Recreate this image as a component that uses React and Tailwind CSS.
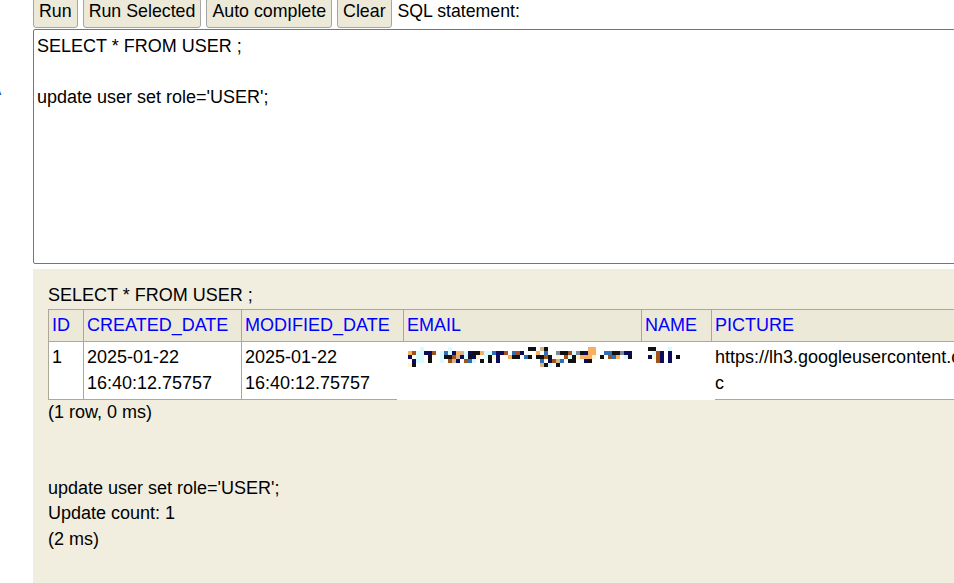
import React from "react";

// colours for the blurred-out email / name blocks
const PIX = {
    c: "#d9fbff",
    k: "#111111",
    n: "#0c0c5a",
    o: "#f8b060",
    b: "#a0521a",
    l: "#2f6fb8",
    t: "#d6b488",
    g: "#7a8a98",
    y: "#fff6d0",
};

const emailRows = [
    "...c......c...................kk.tk..........oo...........",
    "obccnnb.clcnotcnkkocclnnb.lbn...o.l..gkkbcgknoo..llkkgnn..",
    "n.cc.k..ckkbtnckny.ckyn..okk.lk.kkbk.y.bckyoooy.k.blo.ck.",
    ".ncc.k..c.btn.blc.k.k.n..........l.nbtl.kk..nk............",
    "yk...............................tkc.k....................",
];

const nameRows = [
    "kk...c..",
    ".cbn.n..",
    "nybn.n.k",
    "..bn.n..",
];

const PixelRows = ({ rows }) => (
    <div className="flex flex-col">
        {rows.map((row, i) => (
            <div key={i} className="flex h-[4px]">
                {row.split("").map((ch, j) => (
                    <span
                        key={j}
                        className="w-[4px] h-[4px] shrink-0"
                        style={{ backgroundColor: PIX[ch] || "transparent" }}
                    />
                ))}
            </div>
        ))}
    </div>
);

const ToolButton = ({ children }) => (
    <button className="h-[30px] -mt-[2px] px-[5px] pb-[5px] bg-[#ece9d8] border border-[#a6a6a6] rounded-[3px] text-[17.8px] leading-[20px] text-black whitespace-nowrap">
        {children}
    </button>
);

const th = "border border-[#aca899] bg-[#ece9d8] px-[3px] py-[3px] text-left font-normal text-[#0000ff]";
const td = "border border-[#aca899] bg-white px-[3px] py-[3px] align-top";

const App = () => {
    return (
        <div className="w-[954px] h-[583px] overflow-hidden bg-white flex text-black font-['Liberation_Sans',Arial,sans-serif]">
            {/* tree frame, only the edge is visible */}
            <div className="w-[33px] shrink-0 overflow-hidden">
                <div className="mt-[82px] -ml-[8px] text-[14px] leading-[16px] text-[#1f4fa0]">A</div>
            </div>

            <div className="flex-1 min-w-0 flex flex-col">
                {/* toolbar */}
                <div className="h-[29px] flex items-start gap-[5px] shrink-0">
                    <ToolButton>Run</ToolButton>
                    <ToolButton>Run Selected</ToolButton>
                    <ToolButton>Auto complete</ToolButton>
                    <ToolButton>Clear</ToolButton>
                    <span className="ml-[1px] text-[17.7px] leading-[22px] whitespace-nowrap">SQL statement:</span>
                </div>

                {/* query editor */}
                <textarea
                    readOnly
                    className="w-[1000px] h-[235px] shrink-0 border border-[#767676] rounded-[2px] pl-[3px] pt-[4px] text-[18px] leading-[25.5px] resize-none outline-none font-['Liberation_Sans',Arial,sans-serif]"
                    defaultValue={"SELECT * FROM USER ;\n\nupdate user set role='USER';"}
                />

                {/* results */}
                <div className="mt-[5px] flex-1 w-[1000px] bg-[#f1eee0] pl-[15px] pt-[14px] text-[18px] leading-[25.5px]">
                    <div>SELECT * FROM USER ;</div>
                    <div className="relative w-fit">
                        <table className="border-collapse table-fixed w-[1063px]">
                            <colgroup>
                                <col className="w-[35px]" />
                                <col className="w-[158px]" />
                                <col className="w-[162px]" />
                                <col className="w-[238px]" />
                                <col className="w-[70px]" />
                                <col className="w-[400px]" />
                            </colgroup>
                            <thead>
                                <tr>
                                    <th className={th}>ID</th>
                                    <th className={th}>CREATED_DATE</th>
                                    <th className={th}>MODIFIED_DATE</th>
                                    <th className={th}>EMAIL</th>
                                    <th className={th}>NAME</th>
                                    <th className={th}>PICTURE</th>
                                </tr>
                            </thead>
                            <tbody>
                                <tr>
                                    <td className={td}>1</td>
                                    <td className={td}>2025-01-22<br />16:40:12.75757</td>
                                    <td className={td}>2025-01-22<br />16:40:12.75757</td>
                                    <td className={td}>&nbsp;</td>
                                    <td className={td}>&nbsp;</td>
                                    <td className={td + " whitespace-nowrap"}>
                                        https://lh3.googleusercontent.com/a/ACg8ocJ
                                        <br />c
                                    </td>
                                </tr>
                            </tbody>
                        </table>
                        {/* redaction over email and name */}
                        <div className="absolute left-[349px] top-[33px] w-[318px] h-[58px] bg-white">
                            <div className="absolute left-[11px] top-[5px]">
                                <PixelRows rows={emailRows} />
                            </div>
                            <div className="absolute left-[251px] top-[5px]">
                                <PixelRows rows={nameRows} />
                            </div>
                        </div>
                    </div>
                    <div>(1 row, 0 ms)</div>
                    <div className="h-[50px]" />
                    <div>update user set role='USER';</div>
                    <div>Update count: 1</div>
                    <div>(2 ms)</div>
                </div>
            </div>
        </div>
    );
};

export default App;
